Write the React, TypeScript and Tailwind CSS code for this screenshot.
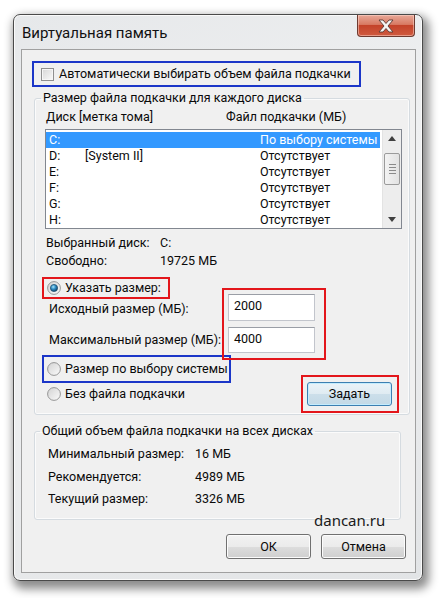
import React from 'react';

const drives = [
  { d: 'C:', label: '', size: 'По выбору системы', sel: true },
  { d: 'D:', label: '[System II]', size: 'Отсутствует', sel: false },
  { d: 'E:', label: '', size: 'Отсутствует', sel: false },
  { d: 'F:', label: '', size: 'Отсутствует', sel: false },
  { d: 'G:', label: '', size: 'Отсутствует', sel: false },
  { d: 'H:', label: '', size: 'Отсутствует', sel: false },
];

const totals = [
  ['Минимальный размер:', '16 МБ'],
  ['Рекомендуется:', '4989 МБ'],
  ['Текущий размер:', '3326 МБ'],
];

function Radio({ checked = false }: { checked?: boolean }) {
  return (
    <svg width="14" height="14" viewBox="0 0 14 14" className="shrink-0">
      <defs>
        <linearGradient id="radioBg" x1="0" y1="0" x2="1" y2="1">
          <stop offset="0" stopColor="#d2d2d2" />
          <stop offset="1" stopColor="#fbfbfb" />
        </linearGradient>
        <radialGradient id="radioDot" cx="0.4" cy="0.35" r="0.7">
          <stop offset="0" stopColor="#a8e4fb" />
          <stop offset="0.45" stopColor="#2f8dc4" />
          <stop offset="1" stopColor="#0d3b5e" />
        </radialGradient>
      </defs>
      <circle cx="7" cy="7" r="6.4" fill="url(#radioBg)" stroke="#8c8c8c" strokeWidth="0.9" />
      {checked && <circle cx="7" cy="7" r="3.6" fill="url(#radioDot)" stroke="#1c4a6b" strokeWidth="0.7" />}
    </svg>
  );
}

function Checkbox() {
  return (
    <span className="block w-[13px] h-[13px] shrink-0 border border-[#8f8f8f] bg-[linear-gradient(135deg,#d6d6d6,#fafafa)] shadow-[inset_0_0_0_1px_#f6f6f6]" />
  );
}

function Button({ children, primary = false }: { children: React.ReactNode; primary?: boolean }) {
  return (
    <div
      className={
        primary
          ? 'w-[85px] h-[24px] flex items-center justify-center rounded-[3px] border border-[#3c7fb1] bg-[linear-gradient(to_bottom,#eaf3f8_0%,#dfebf2_50%,#ccdfea_50%,#c3d9e6_100%)] shadow-[inset_0_0_0_1px_#c4ecfd]'
          : 'w-[85px] h-[25px] flex items-center justify-center rounded-[3px] border border-[#707070] bg-[linear-gradient(to_bottom,#f2f2f2_0%,#ebebeb_50%,#dddddd_50%,#cfcfcf_100%)] shadow-[inset_0_0_0_1px_#fcfcfc]'
      }
    >
      {children}
    </div>
  );
}

function CloseButton() {
  return (
    <div className="mr-[7px] w-[58px] h-[22px] flex items-center justify-center rounded-b-[4px] border border-t-0 border-[#6e3a30] bg-[linear-gradient(to_bottom,#e8a898_0%,#d87a63_45%,#c4432a_50%,#cf5a3f_100%)] shadow-[inset_0_0_0_1px_rgba(255,220,210,0.5)]">
      <svg width="18" height="14" viewBox="0 0 18 14">
        <path
          d="M2 1 H6 L9 4.5 L12 1 H16 L11 7 L16 13 H12 L9 9.5 L6 13 H2 L7 7 Z"
          fill="#f4f4f4"
          stroke="#5a3a34"
          strokeWidth="0.9"
          strokeLinejoin="round"
        />
      </svg>
    </div>
  );
}

function ScrollBar() {
  return (
    <div className="w-[19px] flex flex-col bg-[#ededed] border-l border-[#e3e3e3]">
      <div className="h-[17px] flex items-center justify-center">
        <svg width="8" height="5" viewBox="0 0 8 5">
          <path d="M0 5 L4 0 L8 5 Z" fill="#404040" />
        </svg>
      </div>
      <div className="flex-1">
        <div className="mt-[6px] mx-auto w-[16px] h-[32px] rounded-[2px] border border-[#9b9b9b] bg-[linear-gradient(to_right,#f3f3f3,#e2e2e2)] flex flex-col items-center justify-center gap-[2px]">
          <span className="block w-[7px] h-px bg-[#8a8a8a]" />
          <span className="block w-[7px] h-px bg-[#8a8a8a]" />
          <span className="block w-[7px] h-px bg-[#8a8a8a]" />
          <span className="block w-[7px] h-px bg-[#8a8a8a]" />
        </div>
      </div>
      <div className="h-[17px] flex items-center justify-center">
        <svg width="8" height="5" viewBox="0 0 8 5">
          <path d="M0 0 L8 0 L4 5 Z" fill="#404040" />
        </svg>
      </div>
    </div>
  );
}

export default function App() {
  return (
    <div className="w-[439px] h-[598px] bg-white pl-[13px] pt-[14px] font-['Roboto',sans-serif] text-[12.5px] leading-[18px] text-[#0a0a0a] whitespace-nowrap">
      {/* Window */}
      <div className="w-[410px] h-[567px] rounded-[7px] border border-[#4a4a4a] bg-[linear-gradient(160deg,#e6e8ea_0%,#f0f1f2_40%,#e2e4e6_100%)] shadow-[3px_5px_10px_3px_rgba(0,0,0,0.45),inset_0_0_0_1px_#fafafa] flex flex-col">
        {/* Title bar */}
        <div className="h-[34px] flex justify-between items-start">
          <div className="pl-[8px] pt-[9px] text-[15px] leading-[18px] text-[#111]">Виртуальная память</div>
          <CloseButton />
        </div>

        {/* Client area */}
        <div className="relative ml-[7px] w-[395px] h-[524px] border border-[#a0a0a0] bg-[#f0f0f0]">
          {/* Auto checkbox */}
          <div className="ml-[10px] mt-[11px] w-[329px] h-[26px] border-2 border-[#1b36c8] flex items-center pl-[7px] gap-[5px]">
            <Checkbox />
            <span>Автоматически выбирать объем файла подкачки</span>
          </div>

          {/* Per-disk group */}
          <fieldset className="ml-[12px] mt-[2px] w-[376px] border border-[#d5dbe0] rounded-[3px] shadow-[inset_0_0_0_1px_#fbfbfb]">
            <legend className="ml-[6px] px-[2px]">Размер файла подкачки для каждого диска</legend>

            <div className="flex pl-[11px] mt-[1px]">
              <span className="w-[180px]">Диск [метка тома]</span>
              <span>Файл подкачки (МБ)</span>
            </div>

            <div className="ml-[10px] mt-[3px] w-[357px] h-[100px] border border-[#828790] bg-white flex">
              <div className="flex-1 pt-[2px] pr-[2px]">
                {drives.map((r) => (
                  <div
                    key={r.d}
                    className={`h-[16px] flex items-center pl-[3px] leading-[16px] ${r.sel ? 'bg-[#3399ff] text-white' : ''}`}
                  >
                    <span className="w-[36px]">{r.d}</span>
                    <span className="w-[175px]">{r.label}</span>
                    <span>{r.size}</span>
                  </div>
                ))}
              </div>
              <ScrollBar />
            </div>

            <div className="pl-[11px] mt-[5px]">
              <div className="flex">
                <span className="w-[114px]">Выбранный диск:</span>
                <span>C:</span>
              </div>
              <div className="flex">
                <span className="w-[114px]">Свободно:</span>
                <span>19725 МБ</span>
              </div>
            </div>

            <div className="flex mt-[7px] pb-[1px]">
              <div className="w-[187px] flex flex-col">
                <div className="ml-[7px] w-[128px] h-[22px] border-2 border-[#e3161b] flex items-center pl-[3px] gap-[4px]">
                  <Radio checked />
                  <span>Указать размер:</span>
                </div>
                <span className="ml-[14px] mt-[1px]">Исходный размер (МБ):</span>
                <span className="ml-[14px] mt-[13px]">Максимальный размер (МБ):</span>
                <div className="ml-[7px] mt-[6px] w-[189px] h-[28px] shrink-0 border-2 border-[#1b36c8] flex items-center pl-[3px] gap-[4px]">
                  <Radio />
                  <span>Размер по выбору системы</span>
                </div>
                <div className="ml-[12px] mt-[2px] h-[18px] flex items-center gap-[4px]">
                  <Radio />
                  <span>Без файла подкачки</span>
                </div>
              </div>

              <div className="flex flex-col">
                <div className="mt-[11px] w-[104px] h-[72px] border-2 border-[#e3161b] pl-[4px] pt-[4px] flex flex-col gap-[6px]">
                  <div className="w-[87px] h-[27px] bg-white border border-[#c2c5cc] border-t-[#9a9ea6] pl-[5px] pt-[2px]">2000</div>
                  <div className="w-[87px] h-[26px] bg-white border border-[#c2c5cc] border-t-[#9a9ea6] pl-[5px] pt-[2px]">4000</div>
                </div>
                <div className="mt-[15px] ml-[79px] w-[98px] h-[38px] border-2 border-[#e3161b] pl-[4px] pt-[5px]">
                  <Button primary>Задать</Button>
                </div>
              </div>
            </div>
          </fieldset>

          {/* Totals group */}
          <fieldset className="ml-[12px] mt-[7px] w-[367px] border border-[#d5dbe0] rounded-[3px] shadow-[inset_0_0_0_1px_#fbfbfb]">
            <legend className="ml-[5px] px-[2px]">Общий объем файла подкачки на всех дисках</legend>
            <div className="pl-[13px] pt-[5px] pb-[11px] flex flex-col gap-[4.5px]">
              {totals.map(([k, v]) => (
                <div key={k} className="flex">
                  <span className="w-[147px]">{k}</span>
                  <span>{v}</span>
                </div>
              ))}
            </div>
          </fieldset>

          {/* Buttons */}
          <div className="mt-[14px] mr-[9px] flex justify-end gap-[10px]">
            <Button>ОК</Button>
            <Button>Отмена</Button>
          </div>

          {/* Watermark */}
          <span className="absolute left-[292px] top-[461px] font-['Noto_Sans',sans-serif] text-[15px] leading-[18px] text-[#1a1a1a]">dancan.ru</span>
        </div>
      </div>
    </div>
  );
}
